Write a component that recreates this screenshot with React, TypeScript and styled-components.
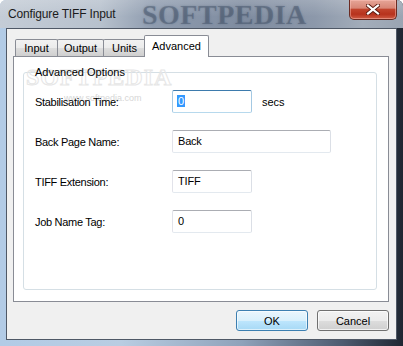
import React from "react";
import styled, { createGlobalStyle } from "styled-components";

const GlobalStyle = createGlobalStyle`
  html, body { margin: 0; padding: 0; background: #ffffff; }
  body { font-family: "Liberation Sans", Arial, sans-serif; }
  * { box-sizing: border-box; }
`;

const Window = styled.div`
  width: 403px;
  height: 346px;
  display: flex;
  flex-direction: column;
  border-radius: 6px 6px 0 0;
  overflow: hidden;
  background: linear-gradient(90deg, #b2cbe6 0%, #b9cde2 30%, #8fa2ba 60%, #4d5b70 85%, #1f2632 100%);
`;

const TitleBar = styled.div`
  position: relative;
  height: 28px;
  display: flex;
  align-items: center;
  padding-left: 8px;
  overflow: hidden;
  background:
    linear-gradient(180deg, rgba(255,255,255,0.18) 0%, rgba(255,255,255,0) 60%),
    linear-gradient(90deg, #c4ccd6 0%, #b7c1cd 25%, #8f9caf 38%, #7f8ca0 60%, #8c98aa 78%, #a3adba 90%, #9aa4b2 100%);
`;

const Watermark = styled.div`
  position: absolute;
  left: 142px;
  top: 0;
  height: 28px;
  line-height: 30px;
  font-family: "Liberation Serif", serif;
  font-weight: bold;
  font-size: 28px;
  letter-spacing: 0.5px;
  color: rgba(62, 78, 100, 0.42);
  text-shadow: 0 0 2px rgba(62, 78, 100, 0.35);
  pointer-events: none;
`;

const Title = styled.span`
  position: relative;
  font-size: 12px;
  letter-spacing: -0.15px;
  color: #1b1b1b;
  flex: 1;
`;

const CloseButton = styled.div`
  position: relative;
  align-self: flex-start;
  width: 48px;
  height: 20px;
  margin-right: 6px;
  border: 1px solid #6b2b22;
  border-top: none;
  border-radius: 0 0 5px 5px;
  background: linear-gradient(180deg, #e6a597 0%, #d88676 42%, #c1432c 50%, #b7321d 75%, #cf5c45 100%);
  box-shadow: inset 0 0 0 1px rgba(255, 200, 190, 0.45);
  display: flex;
  align-items: center;
  justify-content: center;
`;

const Frame = styled.div`
  flex: 1;
  display: flex;
  padding: 0 6px 6px 6px;
`;

const Client = styled.div`
  flex: 1;
  display: flex;
  flex-direction: column;
  border: 1px solid #4f5866;
  background: #f0f0f0;
  padding: 6px 7px 8px 6px;
`;

const TabStrip = styled.div`
  height: 21px;
  display: flex;
  align-items: flex-end;
  padding-left: 2px;
  position: relative;
  z-index: 1;
`;

const Tab = styled.div<{ $selected?: boolean; $w: number }>`
  position: relative;
  width: ${(p) => p.$w}px;
  height: ${(p) => (p.$selected ? 22 : 17)}px;
  margin-left: ${(p) => (p.$selected ? -2 : -1)}px;
  margin-right: ${(p) => (p.$selected ? -2 : 0)}px;
  margin-bottom: ${(p) => (p.$selected ? -1 : 0)}px;
  z-index: ${(p) => (p.$selected ? 2 : 1)};
  border: 1px solid #898c95;
  border-bottom: none;
  border-radius: 2px 2px 0 0;
  background: ${(p) =>
    p.$selected ? "#ffffff" : "linear-gradient(180deg, #f2f2f2 0%, #ebebeb 50%, #dddddd 51%, #cfcfcf 100%)"};
  font-size: 11px;
  color: #000;
  display: flex;
  align-items: center;
  justify-content: center;
  padding-bottom: ${(p) => (p.$selected ? 2 : 0)}px;
  &:first-child {
    margin-left: 0;
  }
`;

const Panel = styled.div`
  height: 246px;
  border: 1px solid #898c95;
  background: #ffffff;
  display: flex;
  flex-direction: column;
  padding: 15px 11px 11px 9px;
`;

const GroupBox = styled.div`
  position: relative;
  flex: 1;
  border: 1px solid #d5dfe5;
  border-radius: 3px;
  padding: 17px 0 0 11px;
`;

const PanelMark = styled.div`
  position: absolute;
  left: 2px;
  top: -9px;
  font-family: "Liberation Serif", serif;
  font-weight: bold;
  font-size: 24px;
  letter-spacing: 1px;
  color: transparent;
  -webkit-text-stroke: 1px #e6e6e6;
  pointer-events: none;
`;

const PanelMarkUrl = styled.div`
  position: absolute;
  left: 40px;
  top: 20px;
  font-size: 9px;
  color: #d6d6d6;
  pointer-events: none;
`;

const GroupCaption = styled.span`
  position: absolute;
  left: 9px;
  top: -8px;
  padding: 0 2px;
  font-size: 11px;
  line-height: 14px;
  color: #000;
`;

const Form = styled.div`
  position: relative;
  display: grid;
  grid-template-columns: 137px auto;
  grid-auto-rows: 23px;
  row-gap: 17px;
  align-items: center;
`;

const Label = styled.span`
  font-size: 11px;
  letter-spacing: -0.3px;
  color: #000;
`;

const FieldCell = styled.div`
  display: flex;
  align-items: center;
  gap: 10px;
`;

const TextBox = styled.div<{ $w: number; $focused?: boolean }>`
  width: ${(p) => p.$w}px;
  height: 23px;
  border: 1px solid;
  border-color: ${(p) =>
    p.$focused ? "#3d7bad #a4c9e3 #b7d9ed #a4c9e3" : "#abadb3 #dbdfe6 #e3e9ef #e2e3ea"};
  border-radius: 2px;
  background: #ffffff;
  display: flex;
  align-items: center;
  padding: 0 0 2px 5px;
  font-size: 11px;
  letter-spacing: -0.2px;
  color: #000;
`;

const Selected = styled.span`
  background: #3399ff;
  color: #ffffff;
  padding: 0 1px;
  margin-left: -1px;
  line-height: 12px;
`;

const Unit = styled.span`
  font-size: 11px;
  color: #000;
`;

const ButtonRow = styled.div`
  display: flex;
  justify-content: flex-end;
  gap: 9px;
  margin-top: 8px;
`;

const Button = styled.div<{ $default?: boolean }>`
  width: 72px;
  height: 21px;
  border: 1px solid ${(p) => (p.$default ? "#3c7fb1" : "#707070")};
  border-radius: 3px;
  background: ${(p) =>
    p.$default
      ? "linear-gradient(180deg, #eaf6fd 0%, #d9f0fc 50%, #bee6fd 51%, #a7d9f5 100%)"
      : "linear-gradient(180deg, #f2f2f2 0%, #ebebeb 50%, #dddddd 51%, #cfcfcf 100%)"};
  box-shadow: inset 0 0 0 1px ${(p) => (p.$default ? "rgba(255,255,255,0.6)" : "rgba(255,255,255,0.7)")};
  display: flex;
  align-items: center;
  justify-content: center;
  font-size: 11px;
  color: #000;
`;

const CloseIcon = () => (
  <svg width="14" height="11" viewBox="0 0 14 11">
    <path d="M2 1.5 L12 9.5 M12 1.5 L2 9.5" stroke="#5a1a10" strokeWidth="4" strokeLinecap="square" />
    <path d="M2 1.5 L12 9.5 M12 1.5 L2 9.5" stroke="#ffffff" strokeWidth="2.2" strokeLinecap="square" />
  </svg>
);

export default function App() {
  return (
    <>
      <GlobalStyle />
      <Window>
        <TitleBar>
          <Watermark>SOFTPEDIA</Watermark>
          <Title>Configure TIFF Input</Title>
          <CloseButton>
            <CloseIcon />
          </CloseButton>
        </TitleBar>
        <Frame>
          <Client>
            <TabStrip>
              <Tab $w={43}>Input</Tab>
              <Tab $w={47}>Output</Tab>
              <Tab $w={43}>Units</Tab>
              <Tab $w={65} $selected>
                Advanced
              </Tab>
            </TabStrip>
            <Panel>
              <GroupBox>
                <PanelMark>SOFTPEDIA</PanelMark>
                <PanelMarkUrl>www.softpedia.com</PanelMarkUrl>
                <GroupCaption>Advanced Options</GroupCaption>
                <Form>
                  <Label>Stabilisation Time:</Label>
                  <FieldCell>
                    <TextBox $w={80} $focused>
                      <Selected>0</Selected>
                    </TextBox>
                    <Unit>secs</Unit>
                  </FieldCell>
                  <Label>Back Page Name:</Label>
                  <FieldCell>
                    <TextBox $w={159}>Back</TextBox>
                  </FieldCell>
                  <Label>TIFF Extension:</Label>
                  <FieldCell>
                    <TextBox $w={80}>TIFF</TextBox>
                  </FieldCell>
                  <Label>Job Name Tag:</Label>
                  <FieldCell>
                    <TextBox $w={80}>0</TextBox>
                  </FieldCell>
                </Form>
              </GroupBox>
            </Panel>
            <ButtonRow>
              <Button $default>OK</Button>
              <Button>Cancel</Button>
            </ButtonRow>
          </Client>
        </Frame>
      </Window>
    </>
  );
}
